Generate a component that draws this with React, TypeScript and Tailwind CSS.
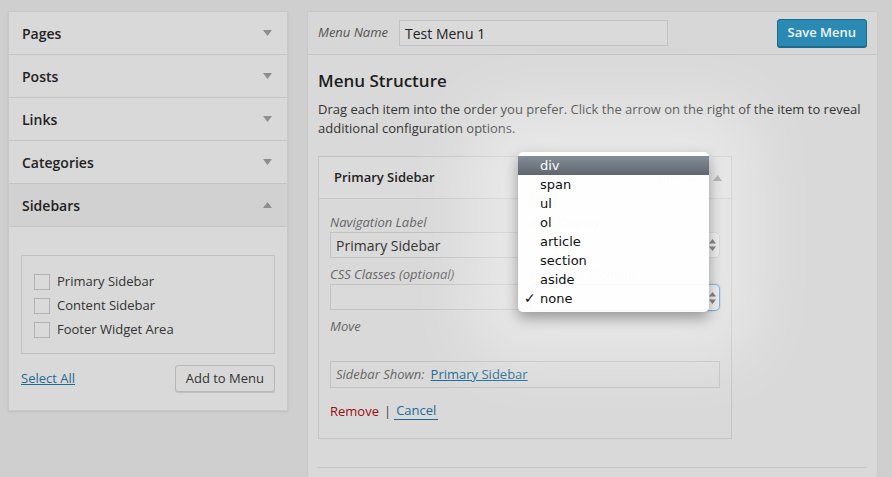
import React from "react";

const sections = ["Pages", "Posts", "Links", "Categories"];
const sidebarItems = ["Primary Sidebar", "Content Sidebar", "Footer Widget Area"];
const options = ["div", "span", "ul", "ol", "article", "section", "aside", "none"];

const Arrow = ({ up = false }: { up?: boolean }) => (
  <svg width="9" height="6" viewBox="0 0 9 6" className="shrink-0">
    {up ? <path d="M4.5 0 L9 6 L0 6 Z" fill="#8e8e8e" /> : <path d="M0 0 L9 0 L4.5 6 Z" fill="#8e8e8e" />}
  </svg>
);

const Stepper = () => (
  <svg width="7" height="12" viewBox="0 0 7 12" className="shrink-0">
    <path d="M3.5 0 L7 4.5 L0 4.5 Z" fill="#444" />
    <path d="M0 7.5 L7 7.5 L3.5 12 Z" fill="#444" />
  </svg>
);

const App = () => {
  return (
    <div
      className="w-[892px] h-[477px] overflow-hidden bg-[#cfcfcf] flex items-start gap-[19px] pl-[8px] pt-[11px] text-[#222]"
      style={{ fontFamily: '"Open Sans", "Liberation Sans", sans-serif' }}
    >
      {/* left: add items */}
      <div className="w-[280px] shrink-0 bg-[#d9d9d9] border border-[#c9c9c9] shadow-[0_1px_2px_rgba(0,0,0,0.08)]">
        {sections.map((s) => (
          <div key={s} className="h-[43px] flex items-center justify-between pl-[13px] pr-[15px] border-b border-[#c5c5c5]">
            <span className="text-[14px] font-semibold">{s}</span>
            <Arrow />
          </div>
        ))}
        <div className="h-[43px] flex items-center justify-between pl-[13px] pr-[15px] border-b border-[#c5c5c5] bg-[#d1d1d1]">
          <span className="text-[14px] font-semibold">Sidebars</span>
          <Arrow up />
        </div>
        <div className="px-[12px] pt-[28px] pb-[18px]">
          <div className="border border-[#c2c2c2] pt-[18px] pb-[15px] pl-[12px] flex flex-col gap-[8px]">
            {sidebarItems.map((item) => (
              <label key={item} className="flex items-center gap-[7px] h-[16px]">
                <span className="w-[16px] h-[16px] border border-[#b2b2b2] bg-[#dadada]" />
                <span className="text-[13px] text-[#333]">{item}</span>
              </label>
            ))}
          </div>
          <div className="mt-[11px] flex items-center justify-between">
            <a className="text-[13px] text-[#1f6a94] underline">Select All</a>
            <button className="h-[27px] px-[10px] text-[13px] text-[#333] bg-[#d8d8d8] border border-[#b8b8b8] rounded-[3px] shadow-[0_1px_0_#c2c2c2]">
              Add to Menu
            </button>
          </div>
        </div>
      </div>

      {/* right: menu editor */}
      <div className="w-[571px] h-[480px] shrink-0 bg-[#d9d9d9] border border-[#c9c9c9]">
        <div className="h-[43px] flex items-center justify-between px-[10px] border-b border-[#c5c5c5] bg-[#d7d7d7]">
          <div className="flex items-center gap-[11px]">
            <span className="text-[13px] italic text-[#555]">Menu Name</span>
            <div className="w-[269px] h-[26px] border border-[#c2c2c2] bg-[#dadada] flex items-center pl-[5px] text-[14px] text-[#222]">
              Test Menu 1
            </div>
          </div>
          <button className="h-[28px] px-[10px] text-[13px] font-semibold text-[#eef4f7] bg-[#2a8ab3] border border-[#1c6a8c] rounded-[3px] shadow-[0_1px_0_#1c6a8c]">
            Save Menu
          </button>
        </div>

        <div className="px-[10px] pt-[14px]">
          <h3 className="text-[17px] font-semibold leading-[24px] text-[#1e1e1e]">Menu Structure</h3>
          <p className="mt-[7px] text-[13px] leading-[19px] text-[#333]">
            Drag each item into the order you prefer. Click the arrow on the right of the item to reveal additional configuration options.
          </p>

          <div className="relative mt-[18px] w-[414px] border border-[#c4c4c4]">
            <div className="h-[42px] flex items-center justify-between pl-[15px] pr-[9px] border-b border-[#c7c7c7] bg-[#dbdbdb]">
              <span className="text-[13px] font-semibold text-[#222]">Primary Sidebar</span>
              <div className="flex items-center gap-[14px]">
                <span className="text-[12px] text-[#aaa]">Sidebar</span>
                <Arrow up />
              </div>
            </div>

            <div className="px-[11px] pt-[14px] pb-[18px]">
              <div className="flex gap-[11px]">
                <div className="w-[189px] shrink-0">
                  <div className="text-[13px] italic leading-[18px] text-[#666]">Navigation Label</div>
                  <div className="mt-[1px] h-[26px] border border-[#c2c2c2] bg-[#dadada] flex items-center pl-[5px] text-[14px] text-[#333] whitespace-nowrap">
                    Primary Sidebar
                  </div>
                  <div className="mt-[7px] text-[13px] italic leading-[18px] text-[#666]">CSS Classes (optional)</div>
                  <div className="mt-[1px] h-[26px] border border-[#c2c2c2] bg-[#dadada]" />
                </div>
                <div className="flex-1">
                  <div className="text-[13px] italic leading-[18px] text-[#aaa]">Item Display</div>
                  <div className="mt-[1px] h-[26px] border border-[#c6c6c6] rounded-[5px] bg-[#e6e6e6] flex items-center justify-between pl-[8px] pr-[3px] text-[13px] text-[#999]">
                    None
                    <Stepper />
                  </div>
                  <div className="mt-[7px] text-[13px] italic leading-[18px] text-[#aaa]">Container Element</div>
                  <div className="mt-[1px] h-[27px] border border-[#4c8fd0] rounded-[5px] bg-[#e8e8e8] shadow-[0_0_2px_#6aa4de] flex items-center justify-end pr-[3px]">
                    <Stepper />
                  </div>
                </div>
              </div>

              <div className="mt-[6px] text-[13px] italic leading-[18px] text-[#666]">Move</div>

              <div className="mt-[26px] h-[27px] border border-[#c2c2c2] flex items-center pl-[5px] gap-[6px] text-[13px]">
                <span className="italic text-[#666]">Sidebar Shown:</span>
                <a className="text-[#1f6a94] underline">Primary Sidebar</a>
              </div>

              <div className="mt-[13px] flex items-center text-[13px] leading-[18px]">
                <a className="text-[#980c0c]">Remove</a>
                <span className="ml-[5px] mr-[3px] text-[#444]">|</span>
                <a className="text-[#1f6a94] border-b border-[#1f6a94] px-[2px]">Cancel</a>
              </div>
            </div>

            {/* open select menu */}
            <div
              className="absolute left-[199px] top-[-5px] w-[191px] pt-[4px] pb-[4px] rounded-[5px] bg-[rgba(255,255,255,0.96)] shadow-[0_6px_14px_rgba(0,0,0,0.35),0_0_70px_45px_rgba(255,255,255,0.42)] text-[13px] text-[#111]"
              style={{ fontFamily: '"DejaVu Sans", "Liberation Sans", sans-serif' }}
            >
              {options.map((o, i) => (
                <div
                  key={o}
                  className={
                    i === 0
                      ? "relative h-[19px] flex items-center pl-[22px] text-white bg-gradient-to-b from-[#858d96] to-[#5e666f]"
                      : "relative h-[19px] flex items-center pl-[22px]"
                  }
                >
                  {o === "none" && <span className="absolute left-[6px] text-[14px]">✓</span>}
                  {o}
                </div>
              ))}
            </div>
          </div>

          <div className="mt-[28px] border-t border-[#c6c6c6]" />
        </div>
      </div>
    </div>
  );
};

export default App;
